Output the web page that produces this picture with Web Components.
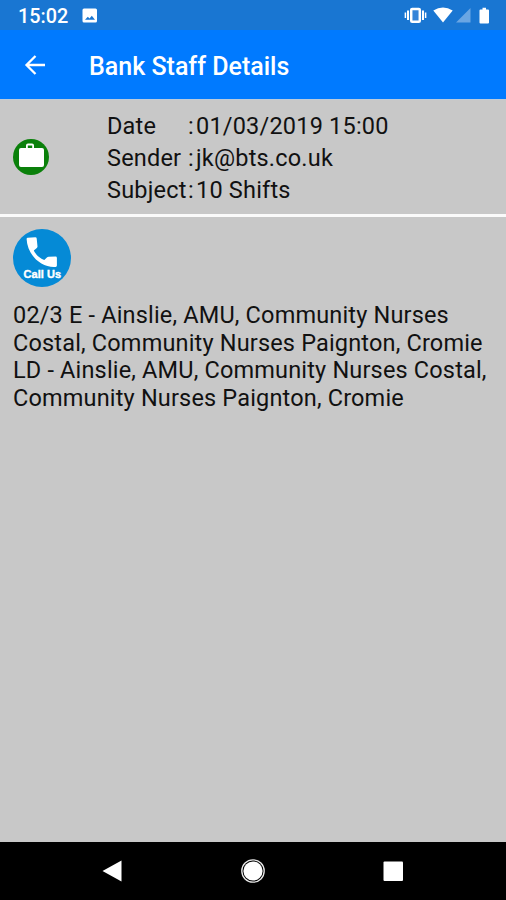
<!DOCTYPE html>
<html lang="en">
<head>
<meta charset="UTF-8">
<title>Bank Staff Details</title>
<style>
body {
    margin: 0;
    background: #c8c8c8;
    font-family: Roboto, "Liberation Sans", sans-serif;
    color: #111;
}
</style>
</head>
<body>
<staff-screen>
    <status-bar slot="top" time="15:02"></status-bar>
    <app-bar slot="top">Bank Staff Details</app-bar>
    <message-header>
        <message-field label="Date">01/03/2019 15:00</message-field>
        <message-field label="Sender">jk@bts.co.uk</message-field>
        <message-field label="Subject">10 Shifts</message-field>
    </message-header>
    <call-button></call-button>
    <message-body>02/3 E - Ainslie, AMU, Community Nurses Costal, Community Nurses Paignton, Cromie<br>LD - Ainslie, AMU, Community Nurses Costal, Community Nurses Paignton, Cromie</message-body>
    <nav-bar slot="bottom"></nav-bar>
</staff-screen>

<script>
class StaffScreen extends HTMLElement {
    constructor() {
        super();
        this.attachShadow({ mode: 'open' }).innerHTML = `
<style>
:host {
    display: flex;
    flex-direction: column;
    height: 900px;
    overflow: hidden;
}

main {
    flex: 1;
}
</style>
<slot name="top"></slot>
<main><slot></slot></main>
<slot name="bottom"></slot>
`;
    }
}

class StatusBar extends HTMLElement {
    constructor() {
        super();
        this.attachShadow({ mode: 'open' }).innerHTML = `
<style>
:host {
    display: flex;
    align-items: center;
    justify-content: space-between;
    height: 30px;
    padding: 0 14px 0 18px;
    box-sizing: border-box;
    background: #1976d2;
    color: #fff;
}

.left {
    display: flex;
    align-items: center;
    gap: 14px;
    padding-top: 2px;
}

.time {
    font-size: 19.800px;
    line-height: 24px;
    font-weight: 500;
    padding-top: 2px;
}

svg {
    display: block;
}
</style>
<div class="left">
    <span class="time">${this.getAttribute('time')}</span>
    <svg width="16" height="16" viewBox="0 0 16 16">
        <path fill="#fff" fill-rule="evenodd" d="M2 .5h11.500a1.500 1.500 0 0 1 1.500 1.500v11a1.500 1.500 0 0 1-1.500 1.500H2A1.500 1.500 0 0 1 .5 13V2A1.500 1.500 0 0 1 2 .5zM3 11.800h10L9.800 7.800 7.500 10.600 5.800 8.800z"/>
    </svg>
</div>
<svg width="88" height="30" viewBox="404 0 88 30">
    <path fill="none" stroke="#fff" stroke-width="1.500" d="M405.400 12.500v5.500M425.600 12.500v5.500"/>
    <path fill="none" stroke="#fff" stroke-width="2" d="M408 10.500v9.500M423 10.500v9.500"/>
    <rect x="411.200" y="9" width="8.600" height="12.800" rx="1" fill="#3484d8" stroke="#fff" stroke-width="2.500"/>
    <path fill="#fff" d="M433.300 10.500Q443 4.500 452.700 10.500L443 22.500z"/>
    <path fill="#6aa6e3" d="M470.500 8v14.500H456z"/>
    <path fill="#fff" d="M480.500 9.500h2v-1.800h3.500v1.800h2a1 1 0 0 1 1 1v12a1 1 0 0 1-1 1h-7.500a1 1 0 0 1-1-1v-12a1 1 0 0 1 1-1z"/>
</svg>
`;
    }
}

class AppBar extends HTMLElement {
    constructor() {
        super();
        this.attachShadow({ mode: 'open' }).innerHTML = `
<style>
:host {
    display: flex;
    align-items: center;
    gap: 43px;
    height: 69px;
    padding: 0 24px;
    box-sizing: border-box;
    background: #007aff;
    color: #fff;
    font-size: 25px;
    font-weight: 500;
}

h1 {
    margin: 4px 0 0;
    font: inherit;
}
</style>
<svg width="22" height="22" viewBox="0 0 22 22">
    <path fill="none" stroke="#fff" stroke-width="2.300" d="M21 11H3M11.500 2 2.500 11l9 9"/>
</svg>
<h1><slot></slot></h1>
`;
    }
}

class MessageHeader extends HTMLElement {
    constructor() {
        super();
        this.attachShadow({ mode: 'open' }).innerHTML = `
<style>
:host {
    display: flex;
    align-items: center;
    gap: 58px;
    height: 118px;
    padding: 0 13px;
    box-sizing: border-box;
    border-top: 1px solid #bccbdb;
    border-bottom: 3px solid #fafafa;
}

.fields {
    padding-top: 2px;
}
</style>
<svg width="36" height="37" viewBox="0 0 36 37">
    <circle cx="18" cy="18" r="18" fill="#0a800a"/>
    <path fill="#fff" fill-rule="evenodd" d="M13 9V6.500a2 2 0 0 1 2-2h4a2 2 0 0 1 2 2V9h8a2 2 0 0 1 2 2v15a2 2 0 0 1-2 2H8a2 2 0 0 1-2-2V11a2 2 0 0 1 2-2zM14.800 9h4.400V6.500h-4.400z"/>
</svg>
<div class="fields"><slot></slot></div>
`;
    }
}

class MessageField extends HTMLElement {
    constructor() {
        super();
        this.attachShadow({ mode: 'open' }).innerHTML = `
<style>
:host {
    display: flex;
    height: 32px;
    line-height: 32px;
    font-size: 23.500px;
    letter-spacing: 0.2px;
    white-space: nowrap;
}

.label {
    width: 81px;
}

.colon {
    width: 8px;
}
</style>
<span class="label">${this.getAttribute('label')}</span>
<span class="colon">:</span>
<span><slot></slot></span>
`;
    }
}

class CallButton extends HTMLElement {
    constructor() {
        super();
        this.attachShadow({ mode: 'open' }).innerHTML = `
<style>
:host {
    display: block;
    padding: 12px 13px 0;
}

svg {
    display: block;
}

text {
    font: bold 11px "Liberation Sans", sans-serif;
}
</style>
<svg width="58" height="58" viewBox="0 0 58 58">
    <circle cx="29" cy="29" r="29" fill="#058ad6"/>
    <path fill="#fff" d="M14.800 8.700l7.500-.5q1.300 0 1.400 1.200l.8 8q.1 1-.7 1.600l-3 2.500c1.800 4 6 8 10.500 9.500l2.600-2.600q.7-.6 1.700-.6l7-.2q1.300 0 1.300 1.300v7.600q0 1.300-1.300 1.400C29 39 14.500 27 13.600 10q0-1.200 1.200-1.300z"/>
    <text x="10.500" y="49" textLength="37.500" fill="#fff" stroke="#fff" stroke-width=".4">Call Us</text>
</svg>
`;
    }
}

class MessageBody extends HTMLElement {
    constructor() {
        super();
        this.attachShadow({ mode: 'open' }).innerHTML = `
<style>
:host {
    display: block;
    padding: 15px 13px 0;
    font-size: 23.500px;
    line-height: 27.700px;
    letter-spacing: 0.170px;
}
</style>
<slot></slot>
`;
    }
}

class NavBar extends HTMLElement {
    constructor() {
        super();
        this.attachShadow({ mode: 'open' }).innerHTML = `
<style>
:host {
    display: flex;
    align-items: center;
    justify-content: space-between;
    height: 58px;
    padding: 0 101px 0 100px;
    box-sizing: border-box;
    background: #000;
}
</style>
<svg width="24" height="24" viewBox="0 0 24 24">
    <path fill="#fff" d="M21.500 1.500v21L2.500 12z"/>
</svg>
<svg width="24" height="24" viewBox="0 0 24 24">
    <circle cx="12" cy="12" r="11.200" fill="none" stroke="#e8e8e8" stroke-width="1.300"/>
    <circle cx="12" cy="12" r="9.600" fill="#fff"/>
</svg>
<svg width="24" height="24" viewBox="0 0 24 24">
    <rect x="2.500" y="2.500" width="19.500" height="19.500" rx="1" fill="#fff"/>
</svg>
`;
    }
}

customElements.define('staff-screen', StaffScreen);
customElements.define('status-bar', StatusBar);
customElements.define('app-bar', AppBar);
customElements.define('message-header', MessageHeader);
customElements.define('message-field', MessageField);
customElements.define('call-button', CallButton);
customElements.define('message-body', MessageBody);
customElements.define('nav-bar', NavBar);
</script>
</body>
</html>
